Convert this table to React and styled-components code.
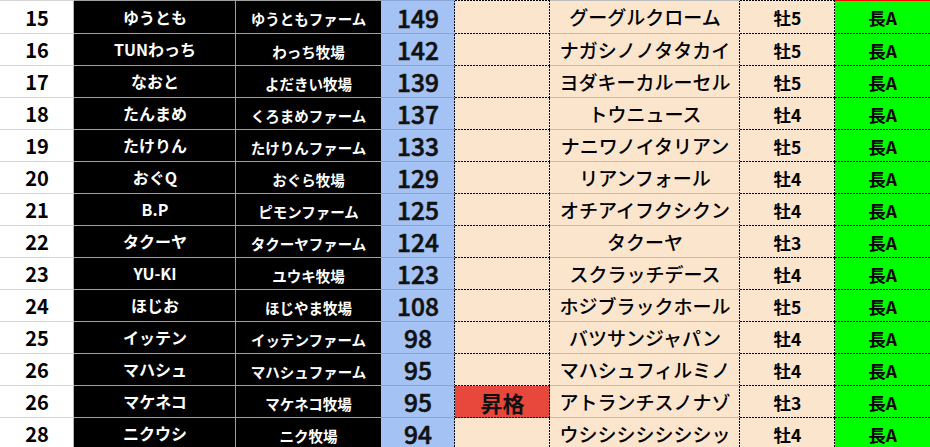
import React from 'react';
import styled, { createGlobalStyle } from 'styled-components';

const GlobalStyle = createGlobalStyle`
  html, body {
    margin: 0;
    padding: 0;
    height: 100%;
    overflow: hidden;
    background: #fff;
  }
  body {
    font-family: "Noto Sans CJK JP", "Noto Sans", sans-serif;
  }
`;

// a grid line: solid colour or the excel style dotted black
const hLine = (k) => k === 'dot'
  ? 'repeating-linear-gradient(to right, #000 0 2px, transparent 2px 3px)'
  : `linear-gradient(${k}, ${k})`;
const vLine = (k) => k === 'dot'
  ? 'repeating-linear-gradient(to bottom, #000 0 2px, transparent 2px 3px)'
  : `linear-gradient(${k}, ${k})`;

const lines = ({ top, bottom, right, bg }) => {
  const layers = [];
  if (top) layers.push(`${hLine(top)} left top / 100% 1px no-repeat`);
  if (bottom) layers.push(`${hLine(bottom)} left bottom / 100% 1px no-repeat`);
  if (right) layers.push(`${vLine(right)} right top / 1px 100% no-repeat`);
  layers.push(bg);
  return layers.join(', ');
};

const Table = styled.div`
  display: flex;
  flex-direction: column;
  width: 930px;
`;

const Row = styled.div`
  display: grid;
  grid-template-columns: 74px 162px 145px 74px 95px 190px 95px 1fr;
  height: ${p => (p.$first ? '34px' : '32px')};
  flex-shrink: 0;
`;

const Cell = styled.div`
  display: flex;
  align-items: center;
  justify-content: center;
  white-space: nowrap;
  padding-top: ${p => (p.$first ? '1px' : '0')};
  line-height: 1.2;
`;

const Rank = styled(Cell)`
  background: ${p => lines({ top: p.$first && '#d4d4d4', bottom: '#d4d4d4', right: '#b4b4b4', bg: '#fff' })};
  color: #000;
  font-size: 20px;
  font-weight: 700;
`;

const Name = styled(Cell)`
  background: ${p => lines({ top: p.$first && '#a0a0a0', bottom: '#a0a0a0', right: '#a0a0a0', bg: '#000' })};
  color: #fff;
  font-size: 16px;
  font-weight: 700;
`;

const Farm = styled(Cell)`
  background: ${p => lines({ top: p.$first && '#a0a0a0', bottom: '#a0a0a0', bg: '#000' })};
  color: #fff;
  font-size: 14.5px;
  font-weight: 700;
  padding-top: ${p => (p.$first ? '4px' : '3px')};
`;

const Score = styled(Cell)`
  background: ${p => lines({ top: p.$first && '#8aa6d6', bottom: '#8aa6d6', right: 'dot', bg: '#a4c2f4' })};
  color: #111;
  font-size: 24.5px;
  font-weight: 500;
  -webkit-text-stroke: 0.6px #111;
`;

const Tag = styled(Cell)`
  background: ${p => lines({ top: p.$first && 'dot', bottom: 'dot', right: 'dot', bg: p.$up ? '#e8473b' : '#fce5cd' })};
  color: #111;
  font-size: 22px;
  font-weight: 700;
`;

const Horse = styled(Cell)`
  background: ${p => lines({ top: p.$first && '#bdbdbd', bottom: '#bdbdbd', right: 'dot', bg: '#fce5cd' })};
  color: #000;
  font-size: 19px;
  font-weight: 500;
`;

const Sex = styled(Cell)`
  background: ${p => lines({ top: p.$first && 'dot', bottom: 'dot', right: 'dot', bg: '#fce5cd' })};
  color: #000;
  font-size: 17.5px;
  font-weight: 700;
`;

const Grade = styled(Cell)`
  background: ${p => lines({ top: p.$first && '#ff0000', bottom: 'dot', bg: '#00ff00' })};
  color: #000;
  font-size: 17.5px;
  font-weight: 700;
`;

const rows = [
  ['15', 'ゆうとも', 'ゆうともファーム', '149', '', 'グーグルクローム', '牡5'],
  ['16', 'TUNわっち', 'わっち牧場', '142', '', 'ナガシノノタタカイ', '牡5'],
  ['17', 'なおと', 'よだきい牧場', '139', '', 'ヨダキーカルーセル', '牡5'],
  ['18', 'たんまめ', 'くろまめファーム', '137', '', 'トウニュース', '牡4'],
  ['19', 'たけりん', 'たけりんファーム', '133', '', 'ナニワノイタリアン', '牡5'],
  ['20', 'おぐQ', 'おぐら牧場', '129', '', 'リアンフォール', '牡4'],
  ['21', 'B.P', 'ピモンファーム', '125', '', 'オチアイフクシクン', '牡4'],
  ['22', 'タクーヤ', 'タクーヤファーム', '124', '', 'タクーヤ', '牡3'],
  ['23', 'YU-KI', 'ユウキ牧場', '123', '', 'スクラッチデース', '牡4'],
  ['24', 'ほじお', 'ほじやま牧場', '108', '', 'ホジブラックホール', '牡5'],
  ['25', 'イッテン', 'イッテンファーム', '98', '', 'バツサンジャパン', '牡4'],
  ['26', 'マハシュ', 'マハシュファーム', '95', '', 'マハシュフィルミノ', '牡4'],
  ['26', 'マケネコ', 'マケネコ牧場', '95', '昇格', 'アトランチスノナゾ', '牡3'],
  ['28', 'ニクウシ', 'ニク牧場', '94', '', 'ウシシシシシシシッ', '牡4'],
];

export default function App() {
  return (
    <>
      <GlobalStyle />
      <Table>
        {rows.map((r, i) => {
          const first = i === 0;
          return (
            <Row key={i} $first={first}>
              <Rank $first={first}>{r[0]}</Rank>
              <Name $first={first}>{r[1]}</Name>
              <Farm $first={first}>{r[2]}</Farm>
              <Score $first={first}>{r[3]}</Score>
              <Tag $first={first} $up={!!r[4]}>{r[4]}</Tag>
              <Horse $first={first}>{r[5]}</Horse>
              <Sex $first={first}>{r[6]}</Sex>
              <Grade $first={first}>長A</Grade>
            </Row>
          );
        })}
      </Table>
    </>
  );
}
